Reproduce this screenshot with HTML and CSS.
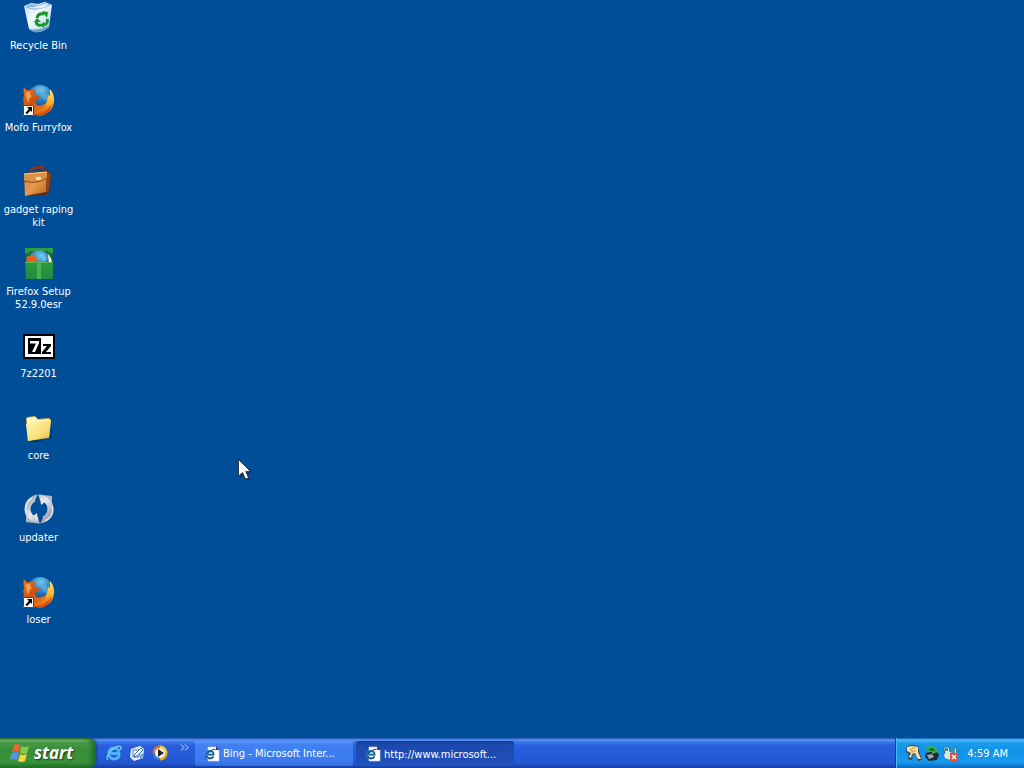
FILE: index.html
```html
<!DOCTYPE html>
<html lang="en">
<head>
<meta charset="utf-8">
<title>Desktop</title>
<link rel="stylesheet" href="styles.css">
</head>
<body>
<svg class="defs" aria-hidden="true">
  <defs>
    <radialGradient id="globe" cx=".55" cy=".2" r=".8"><stop offset="0" stop-color="#6cc8ee"/><stop offset=".5" stop-color="#2878bd"/><stop offset="1" stop-color="#123a78"/></radialGradient>
    <linearGradient id="fur" x1="0" y1="0" x2="1" y2="1"><stop offset="0" stop-color="#e8752a"/><stop offset=".5" stop-color="#d0500f"/><stop offset="1" stop-color="#f08a24"/></linearGradient>
    <linearGradient id="tail" x1="0" y1="0" x2="0" y2="1"><stop offset="0" stop-color="#ffe878"/><stop offset=".5" stop-color="#f9b42e"/><stop offset="1" stop-color="#dd5a12"/></linearGradient>
    <linearGradient id="bin" x1="0" y1="0" x2="1" y2="1"><stop offset="0" stop-color="#b9d9f2"/><stop offset=".4" stop-color="#f4fbff"/><stop offset="1" stop-color="#a9cbe6"/></linearGradient>
    <linearGradient id="leather" x1="0" y1="0" x2="1" y2="1"><stop offset="0" stop-color="#d07a32"/><stop offset=".5" stop-color="#e89a4c"/><stop offset="1" stop-color="#b4601f"/></linearGradient>
    <linearGradient id="box" x1="0" y1="0" x2="0" y2="1"><stop offset="0" stop-color="#2f9a3b"/><stop offset="1" stop-color="#1c8a45"/></linearGradient>
    <linearGradient id="paper" x1="0" y1="0" x2="1" y2="1"><stop offset="0" stop-color="#fff8b8"/><stop offset=".6" stop-color="#f9e07a"/><stop offset="1" stop-color="#e4bc4c"/></linearGradient>
    <linearGradient id="steel" x1="0" y1="0" x2="1" y2="1"><stop offset="0" stop-color="#98a3b0"/><stop offset=".45" stop-color="#e6eaee"/><stop offset="1" stop-color="#8692a2"/></linearGradient>
    <symbol id="firefox" viewBox="0 0 32 32">
      <circle cx="17" cy="14" r="13" fill="url(#globe)"/>
      <path d="M11 5Q15 2 20 3Q17 5 19 7Q16 7 14 10ZM21 9Q26 10 25 15Q22 19 20 15Q18 12 21 9Z" fill="#69b9df" opacity=".5"/>
      <path d="M27 5Q32 11 31 18Q30 27 22 30Q15 33 8 29Q15 28 20 23Q25 18 25 11L27 12Z" fill="url(#tail)"/>
      <path d="M1 3Q3 7 7 6Q10 4 13 7Q10 9 12 11L17 12Q16 15 13 16Q11 19 14 21Q17 23 21 20Q23 20 23 22Q20 27 15 29Q8 31 3 25Q-1 19 1 11Q0 7 1 3Z" fill="url(#fur)"/>
      <path d="M3 8Q6 9 8 7Q6 11 9 12Q5 14 6 19Q3 16 3 8Z" fill="#f6a04b"/>
      <path d="M10 30Q22 31 29 20Q27 30 18 32Q13 32 10 30Z" fill="#d6500e"/>
    </symbol>
    <symbol id="shortcut" viewBox="0 0 11 11">
      <path d="M0 0H11V11H0Z" fill="#fff"/><path d="M.5 .5H10.5V10.5H.5Z" fill="none" stroke="#444"/>
      <path d="M4 2H9V7L7.500 5.500L4 9.200L2.500 7.800L5.800 4Z" fill="#000"/>
    </symbol>
    <symbol id="iepage" viewBox="0 0 16 16">
      <path d="M4 1H12L15 4V15H4Z" fill="#fff" stroke="#c3cbd8" stroke-width=".7"/><path d="M12 0L15.500 4H12Z" fill="#39475e"/>
      <circle cx="6" cy="8.700" r="4.500" fill="#e9f4fb"/>
      <path d="M9.500 10.500Q8.500 12.500 6 12.500Q2.500 12 2.500 8.500Q3 5 6.200 5Q9.800 5.200 9.500 8.700H4" fill="none" stroke="#15578f" stroke-width="1.800"/>
      <path d="M1.500 13.500Q0 11 5 6Q10 2 11.500 4" fill="none" stroke="#1b65a7" stroke-width="1.200"/>
    </symbol>
  </defs>
</svg>

<main class="desktop">
  <ul class="icons">
    <li><button class="shortcut" type="button">
      <svg class="glyph" viewBox="0 0 32 32" aria-hidden="true">
        <path d="M1 4L8 1L15 2L22 0L29 3L26 25Q20 31 11 30L6 27Z" fill="url(#bin)"/>
        <path d="M2 5Q9 9 16 7Q23 6 28 3L22 1L15 3L8 2Z" fill="#8eb6dc"/>
        <path d="M4 5Q10 6 14 4L22 2L26 3Q22 6 15 6.500Q8 7 4 5Z" fill="#dceefb"/>
        <path d="M7 27Q17 29 26 23L25 26Q19 31 11 30Z" fill="#6e9fd0"/>
        <g fill="none" stroke="#159a20" stroke-width="3"><path d="M14 16Q15 11 21 12"/><path d="M24 17Q26 22 20 23"/><path d="M18 23Q14 24 13 20"/></g>
        <path d="M19 9L25 10L24 16ZM21 20L17 23L21 26ZM11 20L14 16L18 20Z" fill="#159a20"/>
      </svg><span>Recycle Bin</span></button></li>
    <li><button class="shortcut" type="button">
      <svg class="glyph" viewBox="0 0 32 32" aria-hidden="true"><use href="#firefox" width="32" height="32"/><use href="#shortcut" y="21" width="11" height="11"/></svg>
      <span>Mofo Furryfox</span></button></li>
    <li><button class="shortcut" type="button">
      <svg class="glyph" viewBox="0 0 32 32" aria-hidden="true">
        <path d="M8 7Q7 3 11 2L18 1Q21 1 20 6" fill="none" stroke="#8c321b" stroke-width="2.500"/>
        <path d="M3 8L23 4L28 7L27 25L23 29L4 30Z" fill="#5b2b13"/>
        <path d="M1 8L24 6L23 26L2 30Z" fill="url(#leather)"/>
        <path d="M24 6L28 8L26 24L23 27Z" fill="#924516"/>
        <path d="M1 8L24 6V12Q19 16 14 16Q7 17 1 15Z" fill="#dc9048"/>
        <path d="M1 15Q8 17 14 16Q20 15 24 12" fill="none" stroke="#8d4415"/><path d="M1 8L24 6" stroke="#ffd08c"/>
        <path d="M13 11H18V14H13Z" fill="#ffe2a2"/>
      </svg><span>gadget raping kit</span></button></li>
    <li><button class="shortcut" type="button">
      <svg class="glyph" viewBox="0 0 32 32" aria-hidden="true">
        <path d="M2 1H30L29 15H3Z" fill="#176f35"/>
        <path d="M2 0H30V5H27L25 3H7L5 5H2Z" fill="#2f9d42"/>
        <circle cx="16" cy="15" r="12.500" fill="url(#globe)"/>
        <path d="M4 8Q7 9 10 6Q10 9 15 10L12 16H3Z" fill="#e8601b"/><path d="M25 6Q29 10 29 16H26Z" fill="#fff2bd"/>
        <path d="M17 6Q22 5 24 11L20 14Z" fill="#80cde9" opacity=".6"/>
        <path d="M2 14H30V31H3Z" fill="url(#box)"/><path d="M14 14H18V31H14Z" fill="#4caf50"/><path d="M2 14.500H30" stroke="#55b75a"/>
      </svg><span>Firefox Setup 52.9.0esr</span></button></li>
    <li><button class="shortcut" type="button">
      <svg class="glyph" viewBox="0 0 32 32" aria-hidden="true">
        <path d="M0 4H32V29H0Z" fill="#000"/><path d="M2 6H30V27H2Z" fill="#fff"/><path d="M5 8H18V24H5Z" fill="#000"/>
        <path d="M7 11H16V13L12 22H9L13 13.500H7Z" fill="#fff"/><path d="M20 14H28V16L23 22H28V24H19V22L24 16H20Z" fill="#000"/>
      </svg><span>7z2201</span></button></li>
    <li><button class="shortcut" type="button">
      <svg class="glyph" viewBox="0 0 32 32" aria-hidden="true">
        <path d="M5 28L27 24L29 10V26L11 31Z" fill="#05264a" opacity=".5"/>
        <path d="M3 7Q3 5 5 5L12 4L15 7L26 6L28 8L26 26L5 29Z" fill="#d9b44f"/>
        <path d="M4 6L12 5L15 8L26 7V11L4 13Z" fill="#fff4b5"/>
        <path d="M3 12Q14 12 17 9L28 8L26 25L5 29Z" fill="url(#paper)"/>
      </svg><span>core</span></button></li>
    <li><button class="shortcut" type="button">
      <svg class="glyph" viewBox="0 0 32 32" aria-hidden="true">
        <circle cx="16" cy="15" r="11.500" fill="none" stroke="url(#steel)" stroke-width="6"/>
        <path d="M3 22L3 28L11 29ZM29 8V2L21 1Z" fill="#aeb9c4"/>
        <path d="M15 0L17 6L14 11L12 6ZM17 30L15 24L18 19L20 24Z" fill="#0b4a8b"/>
        <path d="M17 3L18 11L22 8ZM15 27L14 19L10 22Z" fill="#e3e7eb"/>
        <path d="M3 18Q1 9 9 4M29 12Q32 22 22 27" fill="none" stroke="#fff" stroke-width="1.500" opacity=".7"/>
      </svg><span>updater</span></button></li>
    <li><button class="shortcut" type="button">
      <svg class="glyph" viewBox="0 0 32 32" aria-hidden="true"><use href="#firefox" width="32" height="32"/><use href="#shortcut" y="21" width="11" height="11"/></svg>
      <span>loser</span></button></li>
  </ul>
  <svg class="pointer" viewBox="0 0 14 22" aria-hidden="true"><path d="M2 3V20L6 16L9 22L12 21L9 15H14Z" fill="#03264c" opacity=".5"/><path d="M.5 .5V17L4.500 13.500L7.500 20L10.500 18.800L7.800 12.500H12.500Z" fill="#fff" stroke="#111" stroke-width=".7"/></svg>
</main>

<footer class="taskbar">
  <button class="start" type="button">
    <svg class="flag" viewBox="0 0 20 20" aria-hidden="true">
      <path d="M4 2Q7 0 10 2L9 9Q6 7 2 9Z" fill="#ef6430"/><path d="M11 3Q15 5 19 3L17 10Q14 12 10 10Z" fill="#86ca45"/>
      <path d="M2 10Q6 8 9 10L7 17Q4 15 0 17Z" fill="#5593ef"/><path d="M10 11Q13 13 17 11L15 18Q12 20 8 18Z" fill="#fbd13e"/>
    </svg><span>start</span>
  </button>
  <nav class="quick" aria-label="Quick Launch">
    <button type="button" aria-label="Internet Explorer"><svg viewBox="0 0 16 16"><path d="M13.500 10Q12 14 8 14Q3 13.500 3 8.500Q3 3 8 3Q13 3 13 8.500H5" fill="none" stroke="#4ab4f6" stroke-width="2.800"/><path d="M2 15Q-1 13 5 6Q12 -1 15 2Q16 3 14 5" fill="none" stroke="#7fd0ff" stroke-width="1.200"/></svg></button>
    <button type="button" aria-label="Show Desktop"><svg viewBox="0 0 16 16"><path d="M2 4L11 1L15 4L14 13L5 16L1 12Z" fill="#e6f0fb"/><path d="M4 5H10V12H4Z" fill="#fff" stroke="#477aac"/><path d="M6 9L12 3L14 5L8 11L5 12Z" fill="#f7f9fd" stroke="#3570a8"/><path d="M11 10L14 8V12L11 14Z" fill="#75a7d8"/></svg></button>
    <button type="button" aria-label="Windows Media Player"><svg viewBox="0 0 16 16"><circle cx="8" cy="8" r="7.500" fill="#3f79c4"/><path d="M8 8V.5A7.500 7.500 0 0 1 15.500 8Z" fill="#f9c832"/><path d="M8 8H15.500A7.500 7.500 0 0 1 8 15.500Z" fill="#f2a61e"/><path d="M8 8V.5A7.500 7.500 0 0 0 .5 8Z" fill="#ea6f31"/><circle cx="8" cy="8" r="5" fill="#f3f5f0"/><path d="M6 4L12 8L6 12Z" fill="#1c2531"/></svg></button>
    <button class="more" type="button" aria-label="More"><svg viewBox="0 0 9 7"><path d="M1 .5L4 3.500L1 6.500M5 .5L8 3.500L5 6.500" fill="none" stroke="#cde2ff"/></svg></button>
  </nav>
  <div class="tasks">
    <button class="task" type="button"><svg viewBox="0 0 16 16" aria-hidden="true"><use href="#iepage"/></svg><span>Bing - Microsoft Inter...</span></button>
    <button class="task active" type="button"><svg viewBox="0 0 16 16" aria-hidden="true"><use href="#iepage"/></svg><span>http://www.microsoft...</span></button>
  </div>
  <div class="tray">
    <svg viewBox="0 0 16 16" aria-hidden="true"><path d="M1 1L6 0L12 1L13 6L16 15L12 16L10 10L7 9L6 15L2 14L3 9L0 7Z" fill="#4c4334"/><path d="M1 2L6 1L12 2L12 7L15 14H12L9 8L6 9L5 13L3 12L5 8L1 6Z" fill="#f0e1b5"/><path d="M4 4L8 2L10 6L6 8Z" fill="#d9a850"/><path d="M6 4L9 4L8 6Z" fill="#fff"/></svg>
    <svg viewBox="0 0 16 16" aria-hidden="true"><path d="M2 8L12 5L15 10L13 15L5 16L1 12Z" fill="#202b35"/><path d="M3 10L8 9L10 12L5 14Z" fill="#9ba9b2"/><path d="M1 3L6 1V0L12 3L14 7L8 9V7L4 7Z" fill="#35b044"/><path d="M4 4L9 3L11 6L7 6Z" fill="#176b29"/></svg>
    <svg viewBox="0 0 16 16" aria-hidden="true"><path d="M1 2H7L8 7L14 2L15 8L8 12L1 10L3 8Z" fill="#d3e7ed" stroke="#34718c"/><path d="M2 3H6V6H3ZM9 5L13 4V8L9 9Z" fill="#4a9294"/><path d="M2 10L8 9L9 15L3 13Z" fill="#dbe6e5"/><path d="M8 8H16V16H8Z" fill="#e04a3c"/><path d="M10 10L14 14M14 10L10 14" stroke="#fff" stroke-width="1.500"/></svg>
    <time datetime="04:59">4:59 AM</time>
  </div>
</footer>
</body>
</html>
```
FILE: styles.css
```css
* { box-sizing: border-box; }

body {
  margin: 0;
  min-height: 100vh;
  display: flex;
  flex-direction: column;
  background: #004e98;
  color: #fff;
  font: 11px/13px "DejaVu Sans Condensed", Tahoma, "DejaVu Sans", sans-serif;
}

button {
  margin: 0;
  padding: 0;
  border: 0;
  background: none;
  color: inherit;
  font: inherit;
}

svg { display: block; flex: none; }
.defs { position: absolute; width: 0; height: 0; }

.desktop { flex: 1; position: relative; }

.icons {
  list-style: none;
  margin: 0;
  padding: 0;
  width: 77px;
  display: grid;
  grid-auto-rows: 82px;
}

.shortcut {
  width: 100%;
  padding-top: 2px;
  display: flex;
  flex-direction: column;
  align-items: center;
  gap: 5px;
}

.shortcut span { max-width: 76px; }
.glyph { width: 32px; height: 32px; }

.pointer {
  position: absolute;
  left: 238px;
  top: 459px;
  width: 14px;
  height: 22px;
}

.taskbar {
  height: 30px;
  display: flex;
  background: linear-gradient(#1f4fae 0, #5a94f5 2px, #3a76ea 4px, #2a5edc 8px, #2459d6 22px, #2153cc 26px, #173c9b 30px);
}

.start {
  width: 96px;
  padding: 0 0 0 10px;
  display: flex;
  align-items: center;
  gap: 4px;
  border-radius: 0 8px 8px 0;
  background: linear-gradient(#2c6a35 0, #74bd74 2px, #459b45 5px, #388e38 12px, #38943a 24px, #24702a 30px);
  box-shadow: inset -4px 0 5px #1d6a2a, 1px 0 2px #17408f;
  font: italic bold 17px/24px "Open Sans", sans-serif;
  text-shadow: 1px 1px 2px #1a3a1c;
}

.flag { width: 20px; height: 20px; }

.quick {
  width: 99px;
  padding-left: 10px;
  display: flex;
  align-items: center;
  gap: 7px;
}

.quick svg, .task svg, .tray svg { width: 16px; height: 16px; }
.quick .more { align-self: flex-start; padding: 6px 0 0 5px; }
.quick .more svg { width: 9px; height: 7px; }

.tasks {
  flex: 1;
  min-width: 0;
  padding: 3px 0 2px;
  display: flex;
  gap: 3px;
}

.task {
  flex: 0 1 158px;
  min-width: 0;
  padding: 0 9px;
  display: flex;
  align-items: center;
  gap: 3px;
  border-radius: 2px;
  background: linear-gradient(#5f9bfa 0, #4080f0 4px, #3b7bef 20px, #316bdb 25px);
  white-space: nowrap;
}

.task.active {
  padding-top: 1px;
  background: linear-gradient(#163f9b 0, #1c49ae 4px, #1e4eb9 20px, #2254bd 25px);
}

.task span { overflow: hidden; }

.tray {
  padding: 0 16px 0 10px;
  display: flex;
  align-items: center;
  gap: 2px;
  border-left: 1px solid #123f9c;
  background: linear-gradient(#1762b4 0, #4fbcf8 2px, #1a9cee 5px, #1290e8 12px, #169aee 24px, #1065bd 30px);
  box-shadow: inset 1px 0 0 #48b8f5;
}

.tray time { margin-left: 7px; white-space: nowrap; }
```
